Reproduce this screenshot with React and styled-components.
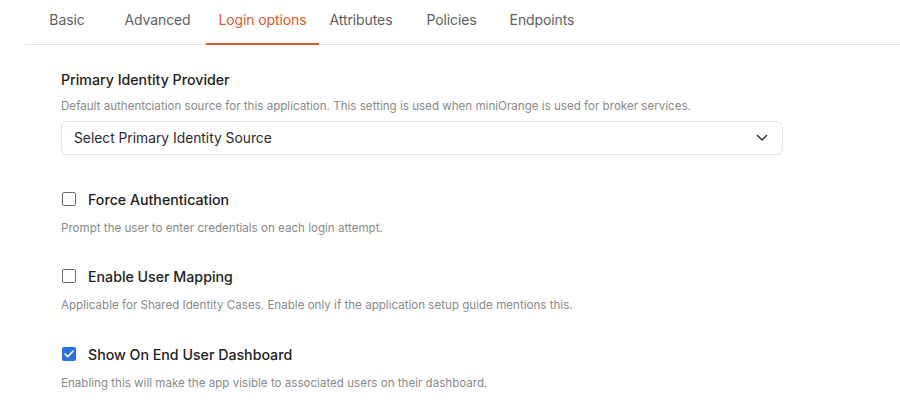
import React from "react";
import styled, { createGlobalStyle } from "styled-components";

const Global = createGlobalStyle`
  html, body { margin: 0; padding: 0; background: #fff; }
  body { font-family: Inter, "Noto Sans", sans-serif; }
`;

const Page = styled.div`
  width: 900px;
  height: 418px;
  overflow: hidden;
  background: #fff;
`;

const TabBar = styled.nav`
  display: flex;
  margin-left: 25px;
  height: 44px;
  border-bottom: 1px solid #e2e2e2;
`;

const Tab = styled.div`
  position: relative;
  width: ${(p) => p.$w}px;
  display: flex;
  align-items: center;
  justify-content: center;
  padding-bottom: 6px;
  box-sizing: border-box;
  font-size: 14px;
  letter-spacing: -0.1px;
  color: ${(p) => (p.$active ? "#d65a2f" : "#5f5f5f")};
  &::after {
    content: "";
    display: ${(p) => (p.$active ? "block" : "none")};
    position: absolute;
    left: 0;
    right: 0;
    bottom: -1px;
    height: 2.5px;
    background: #d65a2f;
  }
`;

const Content = styled.div`
  padding: 25px 0 0 61px;
  width: 722px;
  display: flex;
  flex-direction: column;
`;

const Heading = styled.div`
  font-size: 14.2px;
  line-height: 20px;
  font-weight: 500;
  color: #222;
`;

const Desc = styled.div`
  font-size: 11.6px;
  line-height: 16px;
  color: #8a8a8a;
  margin-top: ${(p) => p.$mt}px;
`;

const Select = styled.div`
  margin-top: 7px;
  height: 34px;
  box-sizing: border-box;
  border: 1px solid #e3e3e3;
  border-radius: 6px;
  display: flex;
  align-items: center;
  justify-content: space-between;
  padding: 0 14px 0 12px;
  font-size: 13.8px;
  color: #2a2a2a;
`;

const Option = styled.div`
  margin-top: ${(p) => p.$mt}px;
  display: flex;
  flex-direction: column;
`;

const CheckRow = styled.label`
  display: flex;
  align-items: center;
  gap: 12px;
  height: 20px;
  font-size: 14.2px;
  font-weight: 500;
  color: #222;
`;

const Box = styled.span`
  width: 14px;
  height: 14px;
  margin-left: 1px;
  box-sizing: border-box;
  border-radius: 2px;
  border: ${(p) => (p.$checked ? "none" : "1.5px solid #6b6b6b")};
  background: ${(p) => (p.$checked ? "#2c72e0" : "#fff")};
  display: flex;
  align-items: center;
  justify-content: center;
`;

const Chevron = () => (
  <svg width="12" height="8" viewBox="0 0 12 8" fill="none">
    <path d="M1.5 1.5 L6 6 L10.5 1.5" stroke="#333" strokeWidth="1.5" strokeLinecap="round" strokeLinejoin="round" />
  </svg>
);

const Check = () => (
  <svg width="10" height="8" viewBox="0 0 10 8" fill="none">
    <path d="M1 4 L3.8 6.6 L9 1.2" stroke="#fff" strokeWidth="1.6" strokeLinecap="round" strokeLinejoin="round" />
  </svg>
);

const tabs = [
  { label: "Basic", w: 84 },
  { label: "Advanced", w: 97 },
  { label: "Login options", w: 113, active: true },
  { label: "Attributes", w: 84 },
  { label: "Policies", w: 97 },
  { label: "Endpoints", w: 84 },
];

const options = [
  { label: "Force Authentication", desc: "Prompt the user to enter credentials on each login attempt.", checked: false, mt: 34 },
  { label: "Enable User Mapping", desc: "Applicable for Shared Identity Cases. Enable only if the application setup guide mentions this.", checked: false, mt: 30 },
  { label: "Show On End User Dashboard", desc: "Enabling this will make the app visible to associated users on their dashboard.", checked: true, mt: 31 },
];

export default function App() {
  return (
    <Page>
      <Global />
      <TabBar>
        {tabs.map((t) => (
          <Tab key={t.label} $w={t.w} $active={t.active}>{t.label}</Tab>
        ))}
      </TabBar>
      <Content>
        <Heading>Primary Identity Provider</Heading>
        <Desc $mt={8}>
          Default authentciation source for this application. This setting is used when miniOrange is used for broker services.
        </Desc>
        <Select>
          <span>Select Primary Identity Source</span>
          <Chevron />
        </Select>
        {options.map((o) => (
          <Option key={o.label} $mt={o.mt}>
            <CheckRow>
              <Box $checked={o.checked}>{o.checked && <Check />}</Box>
              {o.label}
            </CheckRow>
            <Desc $mt={11}>{o.desc}</Desc>
          </Option>
        ))}
      </Content>
    </Page>
  );
}
